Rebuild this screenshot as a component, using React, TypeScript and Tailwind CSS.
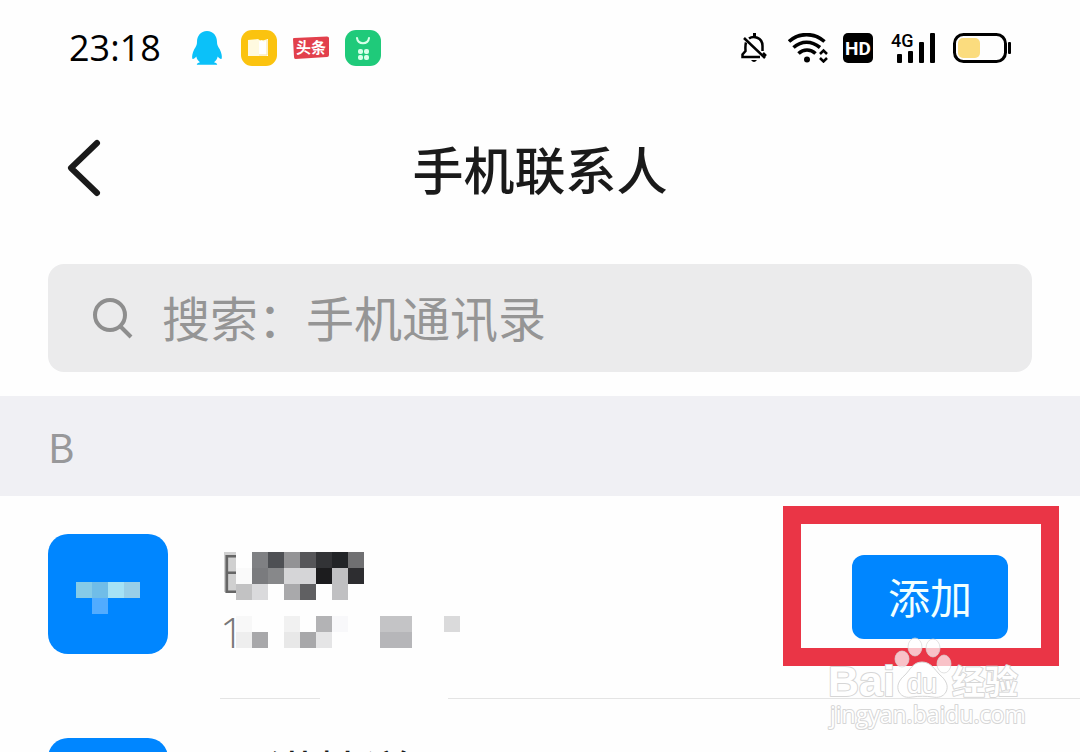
import React from "react";

const nameTiles = [
  [16, 0, "#fefefe"],
  [16, 16, "#fafafa"],
  [16, 32, "#c2c2c3"],
  [32, 0, "#7f8083"],
  [48, 0, "#4e5054"],
  [64, 0, "#939395"],
  [80, 0, "#565659"],
  [96, 0, "#323336"],
  [112, 0, "#222427"],
  [128, 0, "#707072"],
  [32, 16, "#7a7b7e"],
  [48, 16, "#87888a"],
  [64, 16, "#d5d5d7"],
  [80, 16, "#d5d5d7"],
  [96, 16, "#1c1c1e"],
  [112, 16, "#c0c0c2"],
  [128, 16, "#2d2d30"],
  [32, 32, "#dadadc"],
  [64, 32, "#a9a9ab"],
  [80, 32, "#606062"],
  [112, 32, "#c0c0c2"],
] as const;

const phoneTiles = [
  [16, 0, "#f8f8f8"],
  [64, 0, "#f1f1f1"],
  [96, 0, "#b3b3b5"],
  [112, 0, "#f8f8fa"],
  [160, 0, "#c4c4c6"],
  [176, 0, "#c4c4c6"],
  [224, 0, "#dadadb"],
  [16, 16, "#eeeeee"],
  [32, 16, "#a8a8aa"],
  [64, 16, "#e8e8e8"],
  [80, 16, "#a8a8aa"],
  [96, 16, "#e5e5e6"],
  [160, 16, "#b6b6b9"],
  [176, 16, "#b6b6b9"],
] as const;

const avatarTiles = [
  [0, 0, "#85cbe8"],
  [16, 0, "#70bde8"],
  [32, 0, "#a5e2f5"],
  [48, 0, "#98cfe8"],
  [16, 16, "#52acff"],
] as const;

type TilesProps = {
  tiles: readonly (readonly [number, number, string])[];
  className: string;
  width: number;
  height: number;
};

const Tiles = ({ tiles, className, width, height }: TilesProps) => (
  <svg
    className={className}
    width={width}
    height={height}
    shapeRendering="crispEdges"
    aria-hidden="true"
  >
    {tiles.map(([x, y, fill]) => (
      <rect key={`${x}-${y}`} x={x} y={y} width="16" height="16" fill={fill} />
    ))}
  </svg>
);

const StatusBar = () => (
  <div className="flex h-24 items-center justify-between pr-[69px] pl-[69px]">
    <div className="flex items-center">
      <time className="font-['Open_Sans'] text-[36px] leading-10 text-black">
        23:18
      </time>
      <div className="ml-7 flex items-center gap-4">
        <svg width="36" height="36" viewBox="0 0 36 36">
          <path
            d="M18 1C11.500 1 8 6 8 12c0 3-.9 4.200-2.600 7C3.300 23 2.700 27 3.400 28.700c.7 1 2.500-.5 3.900-2.200.5 2.700 1.700 4.200 3.700 5.700-2 .6-3.200 1.200-3.200 2.600h20.400c0-1.400-1.200-2-3.200-2.600 2-1.500 3.200-3 3.700-5.700 1.400 1.700 3.200 3.200 3.900 2.200.7-1.700.1-5.700-2-9.700C28.900 16.200 28 15 28 12 28 6 24.500 1 18 1z"
            fill="#0bc1f9"
          />
        </svg>
        <svg width="36" height="36" viewBox="0 0 36 36">
          <rect width="36" height="36" rx="11" fill="#fbc30f" />
          <path d="M7 10l10-1 3 2 7-2v17H7z" fill="#fffae0" />
          <path d="M18 11v15h9V9l-4 3-2-2z" fill="#fff" />
          <path d="M26 10v15h-8" fill="none" stroke="#f8e39a" />
        </svg>
        <svg width="36" height="36" viewBox="0 0 36 36">
          <path
            d="M1 8q-1 0-1 1l1 18q0 2 1.500 2L34 27q2 0 2-2V8q0-1.500-2-1.500z"
            fill="#e2404c"
          />
          <text
            x="3"
            y="23"
            fontSize="15"
            fontWeight="700"
            fill="#fff"
            fontFamily="Noto Sans CJK SC, sans-serif"
          >
            头条
          </text>
        </svg>
        <svg width="36" height="36" viewBox="0 0 36 36">
          <rect width="36" height="36" rx="11" fill="#1fca7a" />
          <path
            d="M12 8c1 7 11 7 12 0"
            fill="none"
            stroke="#d8ffe9"
            strokeWidth="2"
            strokeLinecap="round"
          />
          <g fill="#d8ffe9">
            <rect x="13" y="19" width="5" height="5" rx="2" />
            <rect x="19" y="19" width="5" height="5" rx="2" />
            <rect x="13" y="25" width="5" height="5" rx="2" />
            <rect x="19" y="25" width="5" height="5" rx="2" />
          </g>
        </svg>
      </div>
    </div>

    <div className="flex items-center text-black">
      <svg
        width="28"
        height="30"
        viewBox="0 0 28 30"
        fill="none"
        stroke="currentColor"
        strokeWidth="2.500"
      >
        <path d="M9 5.500C13 2.500 22.500 4 22.500 13v5M6 9.500c-1 3-.5 6-.5 8.500l-3 3.500V24H20M23 20l3 3" />
        <path d="M4 5l21 20" />
        <path d="M13 0h3v4h-3z" fill="currentColor" stroke="none" />
        <path d="M11 27h6q-3 4-6 0z" fill="currentColor" stroke="none" />
      </svg>
      <svg
        className="ml-5"
        width="40"
        height="30"
        viewBox="0 0 40 30"
        fill="none"
        stroke="currentColor"
        strokeWidth="3.600"
      >
        <path d="M1 8.500C11-.7 26-.7 36.500 8.500M5.500 14.500c8-7 18-7 26.500 0M10.500 20.500c5-4.700 12-4.700 17 0" />
        <circle cx="19" cy="26.500" r="3" fill="currentColor" stroke="none" />
        <path
          d="M32 21l3.500-3.500L39 21M32 25l3.500 3.500L39 25"
          strokeWidth="2.500"
        />
      </svg>
      <svg className="ml-[15px]" width="30" height="30" viewBox="0 0 30 30">
        <rect width="30" height="30" rx="5" fill="currentColor" />
        <text
          x="15"
          y="22"
          textAnchor="middle"
          fontSize="19"
          fontWeight="700"
          fill="#fff"
          fontFamily="Roboto, sans-serif"
        >
          HD
        </text>
      </svg>
      <svg
        className="ml-[18px] overflow-visible"
        width="46"
        height="30"
        viewBox="0 0 46 30"
      >
        <text
          x="0"
          y="14"
          fontSize="18"
          fontWeight="500"
          fontFamily="Roboto, sans-serif"
          fill="currentColor"
        >
          4G
        </text>
        <g fill="currentColor">
          <rect x="6" y="21" width="5" height="9" rx="1" />
          <rect x="17" y="18" width="5" height="12" rx="1" />
          <rect x="28" y="9" width="5" height="21" rx="1" />
          <rect x="39" y="0" width="5" height="30" rx="1" />
        </g>
      </svg>
      <svg className="ml-4" width="58" height="30" viewBox="0 0 58 30">
        <rect
          x="1.500"
          y="1.500"
          width="51"
          height="27"
          rx="9"
          fill="none"
          stroke="currentColor"
          strokeWidth="3"
        />
        <rect x="5" y="5" width="22" height="20" rx="5" fill="#fbdc7e" />
        <rect x="55" y="9" width="3" height="12" rx="1" fill="currentColor" />
      </svg>
    </div>
  </div>
);

const Watermark = () => (
  <svg
    className="pointer-events-none absolute top-[636px] right-[54px]"
    width="200"
    height="100"
    viewBox="0 0 200 100"
    fill="#fff"
    stroke="#d6d6d6"
    strokeWidth="1"
    aria-hidden="true"
  >
    <g fillOpacity=".7" strokeOpacity=".7">
      <ellipse cx="76" cy="23" rx="7" ry="8" />
      <ellipse cx="89" cy="11" rx="7" ry="9" />
      <ellipse cx="107" cy="12" rx="7" ry="9" />
      <ellipse cx="118" cy="28" rx="7" ry="9" />
    </g>
    <path d="M96 26c-9 0-12 8-17 13-6 5-9 11-6 17 3 5 8 6 13 5 7-1 14-1 21 0 5 1 10 0 13-5 3-6 0-12-6-17-5-5-9-13-18-13z" />
    <g strokeWidth="2" strokeLinejoin="round" paintOrder="stroke">
      <text
        x="2"
        y="60"
        fontSize="43"
        fontWeight="700"
        fontFamily="Liberation Sans, sans-serif"
      >
        Bai
      </text>
      <text
        x="81"
        y="57"
        fontSize="27"
        fontFamily="Liberation Sans, sans-serif"
      >
        du
      </text>
      <text
        x="126"
        y="58"
        fontSize="33"
        fontWeight="700"
        fontFamily="Noto Sans CJK SC, sans-serif"
      >
        经验
      </text>
      <text x="4" y="87" fontSize="23" fontFamily="Open Sans, sans-serif">
        jingyan.baidu.com
      </text>
    </g>
  </svg>
);

export default function App() {
  return (
    <main className="relative h-screen overflow-hidden bg-[#fefefe] font-['Noto_Sans_CJK_SC',sans-serif] text-[#1a1a1a]">
      <StatusBar />

      <header className="relative flex h-36 items-center justify-center">
        <button
          type="button"
          aria-label="返回"
          className="absolute left-16 flex h-16 w-10 items-center justify-center"
        >
          <svg
            width="40"
            height="64"
            viewBox="0 0 40 64"
            fill="none"
            stroke="currentColor"
            strokeWidth="6"
            strokeLinecap="round"
            strokeLinejoin="round"
          >
            <path d="M33 7L7 32l26 25" />
          </svg>
        </button>
        <h1 className="text-[51px] leading-[64px] font-medium">手机联系人</h1>
      </header>

      <label className="mx-12 mt-6 flex h-[108px] items-center rounded-2xl bg-[#ebebec] pl-11">
        <svg
          width="42"
          height="44"
          viewBox="0 0 42 44"
          fill="none"
          stroke="#8e8e8e"
          strokeWidth="4"
          aria-hidden="true"
        >
          <circle cx="18" cy="19" r="15" />
          <path d="M28 30l11 11" />
        </svg>
        <input
          type="search"
          aria-label="搜索"
          placeholder="搜索：手机通讯录"
          className="mb-1 ml-7 h-16 min-w-0 flex-1 bg-transparent text-[48px] outline-none placeholder:text-[#959595]"
        />
      </label>

      <h2 className="mt-6 flex h-[100px] items-center bg-[#f0f0f4] px-12 text-[40px] leading-[52px] text-[#98989a]">
        B
      </h2>

      <ul>
        <li className="flex h-[204px] pl-12">
          <div className="mt-[38px] flex size-[120px] shrink-0 items-center justify-center rounded-[20px] bg-[#0086ff]">
            <Tiles tiles={avatarTiles} className="mt-2" width={64} height={32} />
          </div>
          <div className="ml-[52px] flex flex-1 flex-col justify-between">
            <div className="flex items-start justify-between pr-[72px]">
              <div className="pt-14">
                <p className="relative h-16 font-['Open_Sans'] text-[54px] leading-10 font-light text-[#666]">
                  <span className="absolute top-0 left-1 h-10 w-3 bg-[#d0d0d0]" />
                  <span className="relative">E</span>
                  <Tiles
                    tiles={nameTiles}
                    className="absolute top-0 left-0"
                    width={144}
                    height={48}
                  />
                </p>
                <p className="relative h-8 font-['Open_Sans'] text-[42px] leading-8 font-light text-[#777]">
                  1
                  <Tiles
                    tiles={phoneTiles}
                    className="absolute top-0 left-0"
                    width={240}
                    height={32}
                  />
                </p>
              </div>
              <div className="relative mt-[59px]">
                <button
                  type="button"
                  className="h-[84px] w-[156px] rounded-xl bg-[#0086ff] pb-1 text-[42px] text-[#f0ffff]"
                >
                  添加
                </button>
                <div className="pointer-events-none absolute -top-[49px] -right-[51px] -bottom-[27px] -left-[69px] border-[18px] border-[#ea3546]" />
              </div>
            </div>
            <div className="mb-px flex">
              <div className="h-px w-[100px] bg-[#e4e4e4]" />
              <div className="ml-[128px] h-px flex-1 bg-[#e4e4e4]" />
            </div>
          </div>
        </li>
        <li className="flex h-[204px] pl-12">
          <div className="mt-[38px] size-[120px] shrink-0 rounded-[20px] bg-[#0086ff]" />
          <p className="mt-10 ml-[52px] text-[48px] leading-[60px]">巴洪桂洋</p>
        </li>
      </ul>

      <Watermark />
    </main>
  );
}
